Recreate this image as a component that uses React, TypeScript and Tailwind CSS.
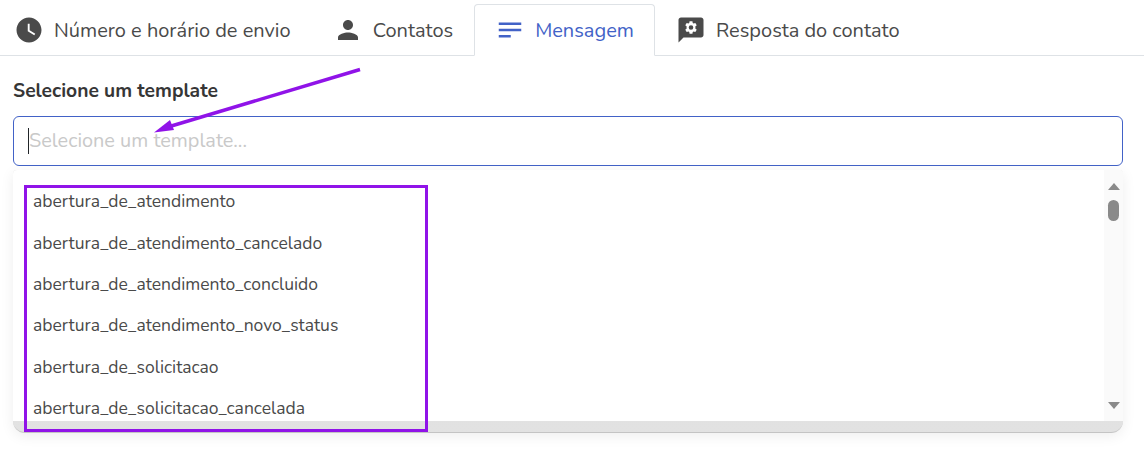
const tabs = [
  { label: "Número e horário de envio", d: "M12 2C6.5 2 2 6.5 2 12s4.5 10 10 10 10-4.5 10-10S17.5 2 12 2zm4.2 14.2L11 13V7h1.5v5.2l4.5 2.7-.8 1.3z" },
  { label: "Contatos", d: "M12 12c2.21 0 4-1.79 4-4s-1.79-4-4-4-4 1.79-4 4 1.79 4 4 4zm0 2c-2.67 0-8 1.34-8 4v2h16v-2c0-2.66-5.33-4-8-4z" },
  { label: "Mensagem", d: "M3 18h9.6v-2H3v2zM3 6v2h18V6H3zm0 7h18v-2H3v2z", active: true },
];

const items = [
  "abertura_de_atendimento",
  "abertura_de_atendimento_cancelado",
  "abertura_de_atendimento_concluido",
  "abertura_de_atendimento_novo_status",
  "abertura_de_solicitacao",
  "abertura_de_solicitacao_cancelada",
];

function Icon({ d }: { d: string }) {
  return (
    <svg viewBox="0 0 24 24" className="w-[30px] h-[30px] shrink-0" fill="currentColor">
      <path d={d} />
    </svg>
  );
}

export default function App() {
  return (
    <div className="relative w-[1144px] h-[466px] overflow-hidden bg-white text-[#4a4a4a] font-['Nunito','Noto_Sans',sans-serif]">
      <div className="flex items-end h-[56px] pt-[4px] border-b border-[#dee2e6] -ml-[7px]">
        {tabs.map((t) => (
          <div
            key={t.label}
            className={
              t.active
                ? "flex items-center gap-[10px] h-[52px] -mb-px px-[20px] border border-[#dee2e6] border-b-white rounded-t-[4px] bg-white text-[#4262c7]"
                : "flex items-center gap-[10px] h-[52px] -mb-px px-[20px] border border-transparent"
            }
          >
            <Icon d={t.d} />
            <span className="text-[20px] pt-[2px] whitespace-nowrap">{t.label}</span>
          </div>
        ))}
        <div className="flex items-center gap-[10px] h-[52px] -mb-px px-[20px] border border-transparent">
          <svg viewBox="0 0 24 24" className="w-[30px] h-[30px] shrink-0" fill="currentColor">
            <path d="M20 2H4c-1.1 0-2 .9-2 2v18l4-4h14c1.1 0 2-.9 2-2V4c0-1.1-.9-2-2-2z" />
            <path
              fill="#fff"
              transform="translate(12 10) scale(1.15) translate(-12.5 -10.7)"
              d="M15.6 10.7l-.1-.7 1-.8-1-1.7-1.2.5-.6-.4-.2-1.3h-2l-.2 1.3-.6.4-1.2-.5-1 1.7 1 .8-.1.7.1.7-1 .8 1 1.7 1.2-.5.6.4.2 1.3h2l.2-1.3.6-.4 1.2.5 1-1.7-1-.8.1-.7zM12.5 12.3a1.6 1.6 0 1 1 0-3.2 1.6 1.6 0 0 1 0 3.2z"
            />
          </svg>
          <span className="text-[20px] pt-[2px] whitespace-nowrap">Resposta do contato</span>
        </div>
      </div>

      <div className="px-[13px]">
        <div className="mt-[22px] h-[26px] text-[19.25px] font-bold leading-[26px] text-[#363636]">Selecione um template</div>
        <div className="mt-[12px] w-[1110px] flex items-center h-[50px] rounded-[6px] border border-[#4262c7] pl-[14px]">
          <div className="w-px h-[26px] bg-[#212529]" />
          <span className="text-[19.9px] text-[#c9c9c9]">Selecione um template...</span>
        </div>
        <div className="relative mt-[4px] h-[263px] w-[1110px] rounded-t-[4px] rounded-b-[12px] overflow-hidden bg-gradient-to-b from-[#dcdcdc] to-[#e2e2e2] border-b border-[#c4c4c4] shadow-[0_3px_14px_rgba(0,0,0,0.07)]">
          <div className="flex h-[251px] bg-white">
            <div className="flex-1 pl-[20px] pt-[11.4px]">
              {items.map((i) => (
                <div key={i} className="h-[41.3px] leading-[41.3px] text-[17.5px] whitespace-nowrap">{i}</div>
              ))}
            </div>
            <div className="w-[19px] bg-[#fafafa] flex flex-col items-center pt-[13px]">
              <div className="w-0 h-0 border-x-[6.5px] border-x-transparent border-b-[7px] border-b-[#8a8a8a]" />
              <div className="mt-[10px] w-[11px] h-[21px] rounded-full bg-[#8a8a8a]" />
              <div className="mt-auto mb-[12px] w-0 h-0 border-x-[6.5px] border-x-transparent border-t-[7px] border-t-[#8a8a8a]" />
            </div>
          </div>
        </div>
      </div>

      <div className="absolute left-[24px] top-[185px] w-[404px] h-[247px] border-[3px] border-[#9013e8]" />
      <svg className="absolute left-0 top-0 pointer-events-none" width="1144" height="466">
        <line x1="360" y1="69.5" x2="168" y2="127" stroke="#9013e8" strokeWidth="3.5" />
        <polygon points="154,132.5 170,120 174,130" fill="#9013e8" />
      </svg>
    </div>
  );
}
